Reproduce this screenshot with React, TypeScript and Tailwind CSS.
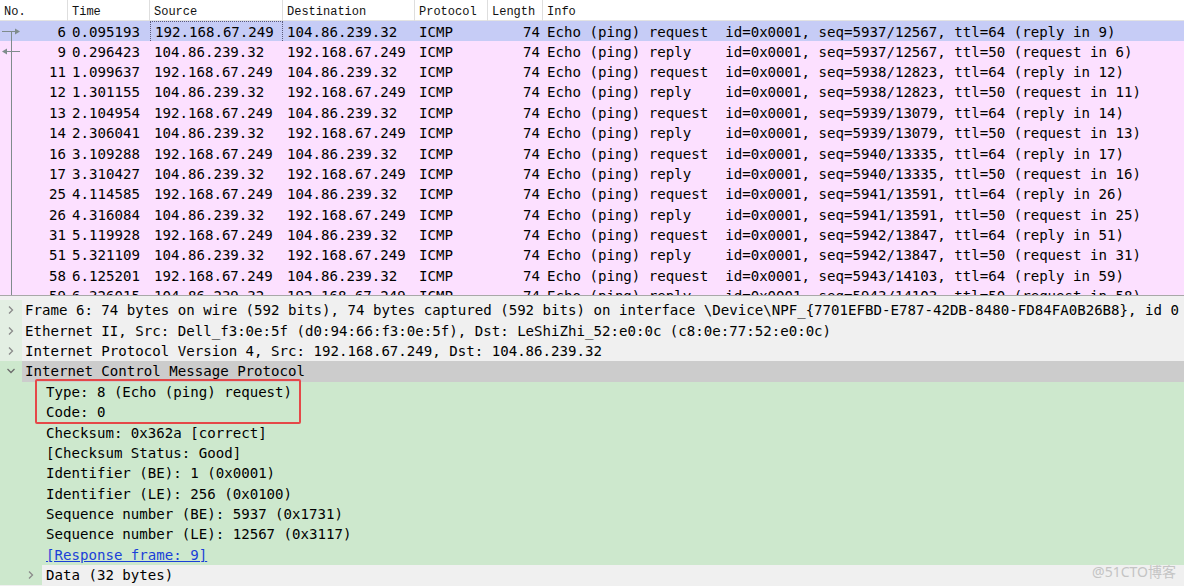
import React from 'react';

type Packet = {
  no: number;
  time: string;
  src: string;
  dst: string;
  kind: 'request' | 'reply';
  seq: string;
  ttl: number;
  rel: string;
};

const packets: Packet[] = [
  { no: 6, time: '0.095193', src: '192.168.67.249', dst: '104.86.239.32', kind: 'request', seq: '5937/12567', ttl: 64, rel: '(reply in 9)' },
  { no: 9, time: '0.296423', src: '104.86.239.32', dst: '192.168.67.249', kind: 'reply', seq: '5937/12567', ttl: 50, rel: '(request in 6)' },
  { no: 11, time: '1.099637', src: '192.168.67.249', dst: '104.86.239.32', kind: 'request', seq: '5938/12823', ttl: 64, rel: '(reply in 12)' },
  { no: 12, time: '1.301155', src: '104.86.239.32', dst: '192.168.67.249', kind: 'reply', seq: '5938/12823', ttl: 50, rel: '(request in 11)' },
  { no: 13, time: '2.104954', src: '192.168.67.249', dst: '104.86.239.32', kind: 'request', seq: '5939/13079', ttl: 64, rel: '(reply in 14)' },
  { no: 14, time: '2.306041', src: '104.86.239.32', dst: '192.168.67.249', kind: 'reply', seq: '5939/13079', ttl: 50, rel: '(request in 13)' },
  { no: 16, time: '3.109288', src: '192.168.67.249', dst: '104.86.239.32', kind: 'request', seq: '5940/13335', ttl: 64, rel: '(reply in 17)' },
  { no: 17, time: '3.310427', src: '104.86.239.32', dst: '192.168.67.249', kind: 'reply', seq: '5940/13335', ttl: 50, rel: '(request in 16)' },
  { no: 25, time: '4.114585', src: '192.168.67.249', dst: '104.86.239.32', kind: 'request', seq: '5941/13591', ttl: 64, rel: '(reply in 26)' },
  { no: 26, time: '4.316084', src: '104.86.239.32', dst: '192.168.67.249', kind: 'reply', seq: '5941/13591', ttl: 50, rel: '(request in 25)' },
  { no: 31, time: '5.119928', src: '192.168.67.249', dst: '104.86.239.32', kind: 'request', seq: '5942/13847', ttl: 64, rel: '(reply in 51)' },
  { no: 51, time: '5.321109', src: '104.86.239.32', dst: '192.168.67.249', kind: 'reply', seq: '5942/13847', ttl: 50, rel: '(request in 31)' },
  { no: 58, time: '6.125201', src: '192.168.67.249', dst: '104.86.239.32', kind: 'request', seq: '5943/14103', ttl: 64, rel: '(reply in 59)' },
  { no: 59, time: '6.326015', src: '104.86.239.32', dst: '192.168.67.249', kind: 'reply', seq: '5943/14103', ttl: 50, rel: '(request in 58)' },
];

const cols = 'grid grid-cols-[68px_82px_133px_132px_73px_55px_1fr]';

// conversation line + request/response arrows in the No. column
const RelMark = ({ index }: { index: number }) => (
  <svg className="absolute left-0 top-0" width="22" height="21" viewBox="0 0 22 21">
    <line x1="11.5" y1={index === 0 ? 10.5 : 0} x2="11.5" y2="21" stroke="#7f8c8c" strokeWidth="1" />
    {index === 0 && (
      <>
        <line x1="2" y1="10.5" x2="16" y2="10.5" stroke="#7f8c8c" strokeWidth="1" />
        <polygon points="15,7.5 20,10.5 15,13.5" fill="#7f8c8c" />
      </>
    )}
    {index === 1 && (
      <>
        <line x1="6" y1="10.5" x2="20" y2="10.5" stroke="#7f8c8c" strokeWidth="1" />
        <polygon points="7,7.5 2,10.5 7,13.5" fill="#7f8c8c" />
      </>
    )}
  </svg>
);

const Chevron = ({ open }: { open?: boolean }) =>
  open ? (
    <svg width="10" height="10" viewBox="0 0 10 10">
      <polyline points="1.5,3 5,6.5 8.5,3" fill="none" stroke="#6b6b6b" strokeWidth="1.3" />
    </svg>
  ) : (
    <svg width="10" height="10" viewBox="0 0 10 10">
      <polyline points="3,1.5 6.5,5 3,8.5" fill="none" stroke="#8a8a8a" strokeWidth="1.3" />
    </svg>
  );

const icmpFields = [
  'Type: 8 (Echo (ping) request)',
  'Code: 0',
  'Checksum: 0x362a [correct]',
  '[Checksum Status: Good]',
  'Identifier (BE): 1 (0x0001)',
  'Identifier (LE): 256 (0x0100)',
  'Sequence number (BE): 5937 (0x1731)',
  'Sequence number (LE): 12567 (0x3117)',
];

export default function App() {
  const mono = { fontFamily: '"DejaVu Sans Mono", "Liberation Mono", monospace' };
  return (
    <div className="w-[1184px] h-[586px] overflow-hidden flex flex-col bg-[#f0f0f0] text-black" style={mono}>
      {/* packet list */}
      <div className="h-[296px] flex flex-col overflow-hidden bg-white border-b border-[#a8a8a8]">
        <div
          className={`${cols} h-[21px] shrink-0 border-b border-[#e3e3e3] text-[12px] text-[#111]`}
          style={{ fontFamily: '"Liberation Mono", "Noto Sans CJK SC", monospace' }}
        >
          {['No.', 'Time', 'Source', 'Destination', 'Protocol', 'Length', 'Info'].map((h, i) => (
            <div key={h} className={`flex items-center pl-1 pt-[3px] ${i < 6 ? 'border-r border-[#dedede]' : ''}`}>
              {h}
            </div>
          ))}
        </div>
        {packets.map((p, i) => (
          <div
            key={p.no}
            className={`${cols} h-[20.4px] shrink-0 items-center text-[14.1px] leading-[20px] whitespace-pre ${
              i === 0 ? 'bg-[#c6ccf6]' : 'bg-[#fce0ff]'
            }`}
          >
            <div className="relative h-full flex items-center justify-end pr-[2px]">
              <RelMark index={i} />
              {p.no}
            </div>
            <div className="pl-1">{p.time}</div>
            <div className={`h-full flex items-center pl-1 ${i === 0 ? 'border border-dotted border-[#5a5a7a]' : ''}`}>
              {p.src}
            </div>
            <div className="pl-1">{p.dst}</div>
            <div className="pl-1">ICMP</div>
            <div className="text-right pr-[3px]">74</div>
            <div className="pl-1 overflow-hidden">
              {`Echo (ping) ${p.kind === 'request' ? 'request  ' : 'reply    '}id=0x0001, seq=${p.seq}, ttl=${p.ttl} ${p.rel}`}
            </div>
          </div>
        ))}
      </div>

      {/* splitter */}
      <div className="h-[4px] shrink-0 bg-[#f0f0f0]" />

      {/* packet details */}
      <div className="relative flex-1 overflow-hidden text-[14.1px] leading-[20px] whitespace-pre">
        {[
          'Frame 6: 74 bytes on wire (592 bits), 74 bytes captured (592 bits) on interface \\Device\\NPF_{7701EFBD-E787-42DB-8480-FD84FA0B26B8}, id 0',
          'Ethernet II, Src: Dell_f3:0e:5f (d0:94:66:f3:0e:5f), Dst: LeShiZhi_52:e0:0c (c8:0e:77:52:e0:0c)',
          'Internet Protocol Version 4, Src: 192.168.67.249, Dst: 104.86.239.32',
        ].map((t) => (
          <div key={t} className="flex h-[20.4px] items-center">
            <div className="w-[22px] h-full shrink-0 flex items-center justify-center bg-[#e3efe3]">
              <Chevron />
            </div>
            <div className="pl-[3px] overflow-hidden">{t}</div>
          </div>
        ))}
        <div className="flex h-[20.4px] items-center">
          <div className="w-[22px] h-full shrink-0 flex items-center justify-center bg-[#cde8cd]">
            <Chevron open />
          </div>
          <div className="flex-1 h-full flex items-center pl-[3px] bg-[#cccccc]">Internet Control Message Protocol</div>
        </div>
        <div className="bg-[#cde8cd]">
          {icmpFields.map((t) => (
            <div key={t} className="h-[20.4px] flex items-center pl-[46px]">
              {t}
            </div>
          ))}
          <div className="h-[20.4px] flex items-center pl-[46px]">
            <span className="text-[#1a3fd8] underline">[Response frame: 9]</span>
          </div>
        </div>
        <div className="flex h-[20.4px] items-center">
          <div className="w-[42px] h-full shrink-0 flex items-center justify-end pr-[6px] bg-[#cde8cd]">
            <Chevron />
          </div>
          <div className="flex-1 h-full flex items-center pl-[4px] bg-[#f0f0f0]">Data (32 bytes)</div>
        </div>

        {/* highlight box */}
        <div className="absolute left-[35px] top-[79px] w-[266px] h-[45px] border-2 border-[#e54848] rounded-[2px]" />

        <div
          className="absolute right-[8px] bottom-[4px] text-[14px] text-[#c4c4c4]"
          style={{ fontFamily: '"Noto Sans", "Noto Sans CJK SC", sans-serif' }}
        >
          @51CTO博客
        </div>
      </div>
    </div>
  );
}
